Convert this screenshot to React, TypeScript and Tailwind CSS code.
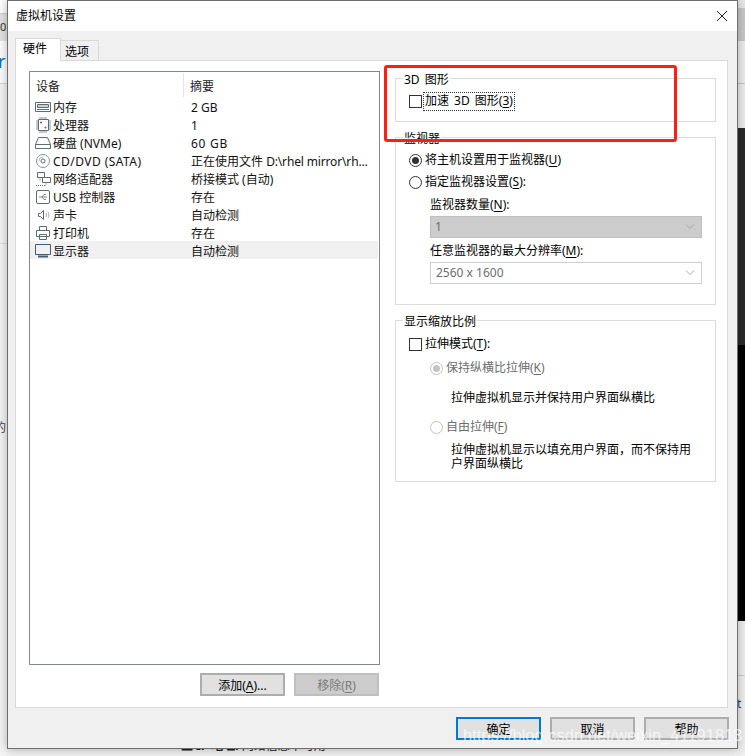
import React from "react";

const FONT = "font-['Noto_Sans','Noto_Sans_CJK_SC',sans-serif]";

interface Device {
  name: React.ReactNode;
  summary: React.ReactNode;
  icon: React.ReactNode;
  selected?: boolean;
}

// 17x17 line icons
function Ico({ children }: { children: React.ReactNode }) {
  return (
    <svg width="17" height="17" viewBox="0 0 17 17" fill="none" stroke="#5f6b73" strokeWidth="1" className="shrink-0 mt-[2px]">
      {children}
    </svg>
  );
}

const devices: Device[] = [
  {
    name: "内存",
    summary: "2 GB",
    icon: (
      <Ico>
        <path d="M.5 3.5h15v9H.5z" />
        <path d="M2.5 5.5h11v3h-11z" fill="#c9ced2" />
        <path d="M2 10.5h12" />
      </Ico>
    ),
  },
  {
    name: "处理器",
    summary: "1",
    icon: (
      <Ico>
        <path d="M3.5 2.5h10v11h-10z" />
        <path d="M5 0v2M7 0v2M9 0v2M11 0v2M5 14v2M7 14v2M9 14v2M11 14v2M1 4h2M1 6h2M1 8h2M1 10h2M1 12h2M14 4h2M14 6h2M14 8h2M14 10h2M14 12h2" stroke="#8b959b" />
        <path d="M5.5 5h1v1h-1zM10 10h1v1h-1z" />
      </Ico>
    ),
  },
  {
    name: "硬盘 (NVMe)",
    summary: <span className="tracking-[0.7px]">60 GB</span>,
    icon: (
      <Ico>
        <path d="M3.5 2.5h9l3 7v4H.5v-4z" />
        <path d="M.5 9.5h15" />
      </Ico>
    ),
  },
  {
    name: <span className="tracking-[0.45px]">CD/DVD (SATA)</span>,
    summary: (
      <span>
        正在使用文件 <span className="tracking-[-0.15px]">D:\rhel mirror\rh...</span>
      </span>
    ),
    icon: (
      <Ico>
        <circle cx="8" cy="8" r="6.5" stroke="#8b959b" />
        <circle cx="8" cy="8" r="2" />
        <path d="M4 8a4 4 0 0 1 4-4" stroke="#b5bcc1" />
      </Ico>
    ),
  },
  {
    name: "网络适配器",
    summary: "桥接模式 (自动)",
    icon: (
      <Ico>
        <path d="M2.5 1.5h7v5h-7zM7.5 6.5h8v5h-8z" fill="#fff" />
        <path d="M5 6.5v4M1 14.5h10M11 11.5v3" strokeDasharray="1 1" />
      </Ico>
    ),
  },
  {
    name: "USB 控制器",
    summary: "存在",
    icon: (
      <Ico>
        <rect x="1.5" y="1.5" width="13" height="13" rx="1.5" />
        <path d="M4 8h8M9 5.5h2M7 8l2-2.5M7 8l2 2.5h2" stroke="#7d888f" />
      </Ico>
    ),
  },
  {
    name: "声卡",
    summary: "自动检测",
    icon: (
      <Ico>
        <path d="M3.5 6.5h2l3-3v9l-3-3h-2z" />
        <path d="M11 6c.7 1.3.7 2.7 0 4M13 5c1 2 1 4 0 6" stroke="#a3abb0" />
      </Ico>
    ),
  },
  {
    name: "打印机",
    summary: "存在",
    icon: (
      <Ico>
        <path d="M4.5 5.5v-4h7v4M1.5 5.5h13v6h-13zM4.5 9.5h7v5h-7z" fill="#fff" />
      </Ico>
    ),
  },
  {
    name: "显示器",
    summary: "自动检测",
    selected: true,
    icon: (
      <Ico>
        <path d="M.5 1.5h15v10H.5z" stroke="#3d5f78" />
        <path d="M3 13.5h10" stroke="#3d5f78" strokeWidth="2" />
      </Ico>
    ),
  },
];

function Mn({ children }: { children: React.ReactNode }) {
  return <span className="underline underline-offset-2">{children}</span>;
}

function Checkbox() {
  return <span className="block w-[13px] h-[13px] shrink-0 border border-[#333333] bg-white" />;
}

function Radio({ checked, disabled }: { checked?: boolean; disabled?: boolean }) {
  return (
    <span
      className={`flex items-center justify-center w-[13px] h-[13px] shrink-0 rounded-full border bg-white ${
        disabled ? "border-[#c4c4c4]" : "border-[#333333]"
      }`}
    >
      {checked && (
        <span className={`block w-[7px] h-[7px] rounded-full ${disabled ? "bg-[#c4c4c4]" : "bg-[#333333]"}`} />
      )}
    </span>
  );
}

function Chevron({ color }: { color: string }) {
  return (
    <svg width="10" height="6" viewBox="0 0 10 6" fill="none" stroke={color}>
      <path d="M1 .5l4 4 4-4" />
    </svg>
  );
}

function Group({ title, className, children }: { title: React.ReactNode; className: string; children: React.ReactNode }) {
  return (
    <fieldset className={`border border-[#dcdcdc] ${className}`}>
      <legend className="ml-[7px] px-[1px] h-4 leading-[19px]">{title}</legend>
      <div className="pl-[13px] pr-[13px]">{children}</div>
    </fieldset>
  );
}

function Btn({ children, className }: { children: React.ReactNode; className: string }) {
  return (
    <button type="button" className={`w-[85px] h-[23px] pt-[1px] leading-[19px] text-center ${className}`}>
      {children}
    </button>
  );
}

export default function App() {
  return (
    <div className={`relative w-[745px] h-[756px] overflow-hidden bg-[#f2f2f2] text-[12px] text-black ${FONT}`}>
      {/* 뒤쪽 창 조각들 */}
      <div className="absolute left-0 top-0 w-[7px] h-[756px] overflow-hidden bg-[#f5f5f5]">
        <div className="h-[14px] bg-white border-b border-[#d0d0d0]" />
        <div className="h-[27px] bg-[#e4e4e4] leading-[26px] text-[11px] text-[#333333]">0</div>
        <div className="h-[43px] bg-white leading-[40px] text-[18px] text-[#0b6fc2] -ml-[2px] border-b border-[#d8d8d8]">r</div>
        <div className="h-[80px]" />
        <div className="h-[80px] border-b border-[#e0e0e0]" />
        <div className="h-[174px]" />
        <div className="-ml-[6px] h-[20px] leading-[20px] text-[12px] text-[#444444]">的</div>
      </div>
      <div className="absolute left-[737px] top-0 w-[8px] h-[756px] bg-[#f0f0f0]">
        <div className="h-[8px] bg-[#e8e8e8]" />
        <div className="h-[33px] bg-[#c9c9c9]" />
        <div className="h-[43px] bg-[#eeeeee] border-b border-[#c8c8c8]" />
        <div className="h-[44px] bg-[#eeeeee]" />
        <div className="h-[217px] bg-[#2b2b2b]" />
        <div className="h-[276px] bg-black" />
        <div className="h-[55px] bg-[#f0f0f0] border-b border-[#cfcfcf]" />
        <div className="h-[30px] leading-[24px] pt-[16px] text-[12px] text-[#1c4f86]">t</div>
      </div>
      <div className="absolute left-[181px] top-[737px] whitespace-nowrap text-[12px] text-[#222222]">
        <span className="font-bold">主 IP 地址:</span> 网络信息不可用
      </div>

      {/* 对话框 */}
      <div className="absolute left-[7px] top-0 w-[731px] h-[749px] flex flex-col bg-[#f0f0f0] border border-[#6f6f6f] shadow-[0_0_10px_rgba(0,0,0,0.3)]">
        <div className="h-[30px] shrink-0 bg-white flex items-center justify-between pl-[8px] pr-[9px]">
          <span>虚拟机设置</span>
          <svg width="12" height="12" viewBox="0 0 12 12" stroke="#222222" fill="none">
            <path d="M1 1l10 10M11 1L1 11" />
          </svg>
        </div>

        <div className="flex items-end h-[29px] shrink-0 pl-[7px]">
          <div className="relative z-10 -mb-[1px] w-[46px] h-[23px] bg-white border border-b-0 border-[#d9d9d9] pl-[7px] leading-[20px]">
            硬件
          </div>
          <div className="w-[38px] h-[20px] bg-[#f0f0f0] border border-b-0 border-l-0 border-[#d9d9d9] pl-[4px] leading-[21px]">
            选项
          </div>
        </div>

        <div className="ml-[7px] w-[713px] h-[648px] bg-white border border-[#d9d9d9] flex gap-[15px] pl-[13px] pt-[10px]">
          <div className="w-[351px] shrink-0 flex flex-col">
            <div className="h-[594px] border border-[#828790] pt-[1px]">
              <div className="flex h-[24px] items-start text-[#222222]">
                <div className="w-[154px] pl-[6px] border-r border-[#e5e5e5] h-full leading-[28px]">设备</div>
                <div className="pl-[6px] leading-[28px] h-full">摘要</div>
              </div>
              <div>
                {devices.map((d, i) => (
                  <div
                    key={i}
                    className={`flex items-center h-[18px] mr-[1px] whitespace-nowrap ${d.selected ? "bg-[#f0f0f0]" : ""}`}
                  >
                    <div className="w-[155px] flex items-center gap-[1px] pl-[5px]">
                      {d.icon}
                      <span className="pt-[4px] text-[#111111]">{d.name}</span>
                    </div>
                    <span className="pl-[6px] pt-[4px] text-[#111111]">{d.summary}</span>
                  </div>
                ))}
              </div>
            </div>
            <div className="flex justify-end gap-[9px] mt-[8px] mr-[1px]">
              <Btn className="bg-[#e1e1e1] border-2 border-[#adadad]">
                添加(<Mn>A</Mn>)...
              </Btn>
              <Btn className="bg-[#cccccc] border-2 border-[#bfbfbf] text-[#7a7a7a]">
                移除(<Mn>R</Mn>)
              </Btn>
            </div>
          </div>

          <div className="w-[321px] shrink-0 -mt-[1px]">
            <Group title={<span className="[word-spacing:2px]">3D 图形</span>} className="h-[52px]">
              <div className="flex items-center gap-[2px] h-[16px] mt-[7px]">
                <Checkbox />
                <span className="px-[1px] w-[90px] h-[17px] leading-[16px] [word-spacing:2px] outline-1 outline-dotted outline-[#333333]">
                  加速 3D 图形(<Mn>3</Mn>)
                </span>
              </div>
            </Group>

            <Group title="监视器" className="mt-[7px] h-[176px]">
              <div className="flex items-center gap-[3px] h-[16px] mt-[7px]">
                <Radio checked />
                <span>
                  将主机设置用于监视器(<Mn>U</Mn>)
                </span>
              </div>
              <div className="flex items-center gap-[3px] h-[16px] mt-[6px]">
                <Radio />
                <span>
                  指定监视器设置(<Mn>S</Mn>):
                </span>
              </div>
              <div className="pl-[21px]">
                <div className="h-[16px] leading-[16px] mt-[7px]">
                  监视器数量(<Mn>N</Mn>):
                </div>
                <div className="flex items-center justify-between h-[22px] mt-[3px] bg-[#cccccc] border border-[#bfbfbf] pl-[4px] pr-[6px] text-[#6d6d6d]">
                  <span>1</span>
                  <Chevron color="#a8a8a8" />
                </div>
                <div className="h-[16px] leading-[16px] mt-[5px]">
                  任意监视器的最大分辨率(<Mn>M</Mn>):
                </div>
                <div className="flex items-center justify-between h-[22px] mt-[3px] bg-white border border-[#cfcfcf] pl-[4px] pr-[6px] text-[#6d6d6d]">
                  <span className="pl-[1px]">2560 x 1600</span>
                  <Chevron color="#a8a8a8" />
                </div>
              </div>
            </Group>

            <Group title="显示缩放比例" className="mt-[7px] h-[170px]">
              <div className="flex items-center gap-[3px] h-[16px] mt-[8px]">
                <Checkbox />
                <span>
                  拉伸模式(<Mn>T</Mn>):
                </span>
              </div>
              <div className="pl-[21px]">
                <div className="flex items-center gap-[3px] h-[16px] mt-[8px] text-[#6d6d6d]">
                  <Radio checked disabled />
                  <span>
                    保持纵横比拉伸(<Mn>K</Mn>)
                  </span>
                </div>
                <div className="pl-[21px] mt-[14px] h-[16px] leading-[16px]">拉伸虚拟机显示并保持用户界面纵横比</div>
                <div className="flex items-center gap-[3px] h-[16px] mt-[13px] text-[#6d6d6d]">
                  <Radio disabled />
                  <span>
                    自由拉伸(<Mn>F</Mn>)
                  </span>
                </div>
                <div className="pl-[21px] mt-[8px] w-[270px] leading-[14px]">
                  拉伸虚拟机显示以填充用户界面，而不保持用户界面纵横比
                </div>
              </div>
            </Group>
          </div>
        </div>

        <div className="flex justify-end gap-[9px] mt-[9px] mr-[8px]">
          <Btn className="bg-[#e1e1e1] border-2 border-[#0078d7]">确定</Btn>
          <Btn className="bg-[#e1e1e1] border-2 border-[#adadad]">取消</Btn>
          <Btn className="bg-[#e1e1e1] border-2 border-[#adadad]">帮助</Btn>
        </div>
      </div>

      {/* 截图标注和水印 */}
      <div className="absolute left-[384px] top-[65px] w-[293px] h-[77px] border-[3px] border-[#fb2012] rounded-[3px]" />
      <div className="absolute left-[463px] top-[723px] whitespace-nowrap text-[16.5px] text-white/70 font-['Liberation_Sans',sans-serif]">
        https://blog.csdn.net/weixin_41191813
      </div>
    </div>
  );
}
